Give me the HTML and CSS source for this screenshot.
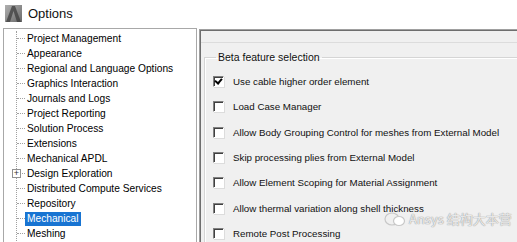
FILE: index.html
```html
<!DOCTYPE html>
<html lang="en">
<head>
    <meta charset="UTF-8">
    <title>Options</title>
    <link rel="stylesheet" href="styles.css">
</head>
<body>
    <div class="titlebar">
        <svg class="app-icon" width="17" height="17" viewBox="0 0 17 17">
            <defs>
                <linearGradient id="g" x1="0" y1="0" x2="1" y2="1">
                    <stop offset="0" stop-color="#b0b0b0"/>
                    <stop offset="1" stop-color="#6a6a6a"/>
                </linearGradient>
            </defs>
            <rect width="17" height="17" fill="url(#g)"/>
            <path d="M1 17 L7 1 L10 1 L16 17 L12 17 L8.5 6 L5 17 Z" fill="#3e3e3e" opacity="0.75"/>
        </svg>
        <span class="title">Options</span>
    </div>

    <div class="main">
        <div class="tree">
            <ul class="tree-list">
                <li><span class="branch"></span><span class="node">Project Management</span></li>
                <li><span class="branch"></span><span class="node">Appearance</span></li>
                <li><span class="branch"></span><span class="node">Regional and Language Options</span></li>
                <li><span class="branch"></span><span class="node">Graphics Interaction</span></li>
                <li><span class="branch"></span><span class="node">Journals and Logs</span></li>
                <li><span class="branch"></span><span class="node">Project Reporting</span></li>
                <li><span class="branch"></span><span class="node">Solution Process</span></li>
                <li><span class="branch"></span><span class="node">Extensions</span></li>
                <li><span class="branch"></span><span class="node">Mechanical APDL</span></li>
                <li><span class="branch"><span class="expander">+</span></span><span class="node">Design Exploration</span></li>
                <li><span class="branch"></span><span class="node">Distributed Compute Services</span></li>
                <li><span class="branch"></span><span class="node">Repository</span></li>
                <li><span class="branch"></span><span class="node selected">Mechanical</span></li>
                <li><span class="branch"></span><span class="node">Meshing</span></li>
            </ul>
        </div>

        <div class="panel">
            <div class="strip"></div>
            <fieldset class="group">
                <legend>Beta feature selection</legend>
                <label class="option"><span class="box checked"></span>Use cable higher order element</label>
                <label class="option"><span class="box"></span>Load Case Manager</label>
                <label class="option"><span class="box"></span>Allow Body Grouping Control for meshes from External Model</label>
                <label class="option"><span class="box"></span>Skip processing plies from External Model</label>
                <label class="option"><span class="box"></span>Allow Element Scoping for Material Assignment</label>
                <label class="option"><span class="box"></span>Allow thermal variation along shell thickness</label>
                <label class="option"><span class="box"></span>Remote Post Processing</label>
            </fieldset>
        </div>
    </div>

    <div class="watermark">
        <svg width="22" height="18" viewBox="0 0 22 18">
            <ellipse cx="8" cy="9" rx="7" ry="6" fill="none" stroke="#c8c8c8" stroke-width="1.2"/>
            <ellipse cx="15" cy="11" rx="5.5" ry="4.5" fill="#fff" stroke="#c8c8c8" stroke-width="1.2"/>
        </svg>
        <span>Ansys 结构大本营</span>
    </div>
</body>
</html>
```

FILE: styles.css
```css
body {
    margin: 0;
    width: 517px;
    height: 242px;
    overflow: hidden;
    background: #fff;
    font-family: "Liberation Sans", Arial, sans-serif;
    font-size: 11px;
    color: #000;
    position: relative;
}
.titlebar {
    height: 28px;
    display: flex;
    align-items: center;
    padding-left: 5px;
    box-sizing: border-box;
    padding-bottom: 1px;
}
.app-icon {
    display: block;
}
.title {
    margin-left: 6px;
    font-size: 13px;
    color: #111;
}
.main {
    display: flex;
    padding-left: 3px;
}
.tree {
    width: 192px;
    height: 220px;
    border: 1px solid #a8a8a8;
    border-bottom: none;
    background: #fff;
}
.tree-list {
    list-style: none;
    margin: 2px 0 0 12px;
    padding: 0;
    border-left: 1px dotted #a0a0a0;
}
.tree-list li {
    display: flex;
    align-items: center;
    height: 15px;
}
.branch {
    width: 8px;
    border-top: 1px dotted #a0a0a0;
    position: relative;
}
.expander {
    position: absolute;
    left: -5px;
    top: -5px;
    width: 7px;
    height: 7px;
    border: 1px solid #919191;
    background: #fff;
    font-size: 9px;
    line-height: 7px;
    text-align: center;
    color: #333;
}
.node {
    padding: 1px 2px;
    line-height: 12px;
    white-space: nowrap;
    font-size: 10.2px;
}
.node.selected {
    background: #1874d2;
    color: #fff;
}
.panel {
    flex: 1;
    margin-left: 2px;
    margin-top: 1px;
    height: 213px;
    background: #f0f0f0;
    border-top: 1px solid #a0a0a0;
    border-left: 1px solid #a0a0a0;
    box-shadow: inset 1px 1px 0 #6e6e6e;
}
.strip {
    height: 12px;
    border-bottom: 1px solid #dcdcdc;
    margin-left: 1px;
}
.group {
    margin: 8px 0 0 4px;
    padding: 6px 0 0 8px;
    border: 1px solid #d5d5d5;
    border-right: none;
    border-bottom: none;
    box-shadow: inset 1px 1px 0 #fff;
}
.group legend {
    padding: 0 2px;
    margin-left: 3px;
    color: #111;
    font-size: 10.5px;
}
.option {
    display: flex;
    align-items: center;
    height: 25.3px;
    white-space: nowrap;
    color: #111;
    font-size: 9.75px;
}
.box {
    width: 9px;
    height: 9px;
    margin-right: 9px;
    background: #fff;
    border-top: 1px solid #808080;
    border-left: 1px solid #808080;
    border-right: 1px solid #fff;
    border-bottom: 1px solid #fff;
    box-shadow: inset 1px 1px 0 #404040, 1px 1px 0 #dcdcdc;
    position: relative;
}
.box.checked::after {
    content: "";
    position: absolute;
    left: 2px;
    top: 0px;
    width: 3px;
    height: 5px;
    border-right: 2px solid #000;
    border-bottom: 2px solid #000;
    transform: rotate(40deg);
}
.watermark {
    position: absolute;
    left: 384px;
    top: 209px;
    display: flex;
    align-items: center;
    gap: 3px;
    font-family: "Noto Sans CJK SC", sans-serif;
    font-size: 13px;
    color: rgba(255, 255, 255, 0.8);
    text-shadow: 0 0 1px #999, 0 0 1px #999;
}
```
